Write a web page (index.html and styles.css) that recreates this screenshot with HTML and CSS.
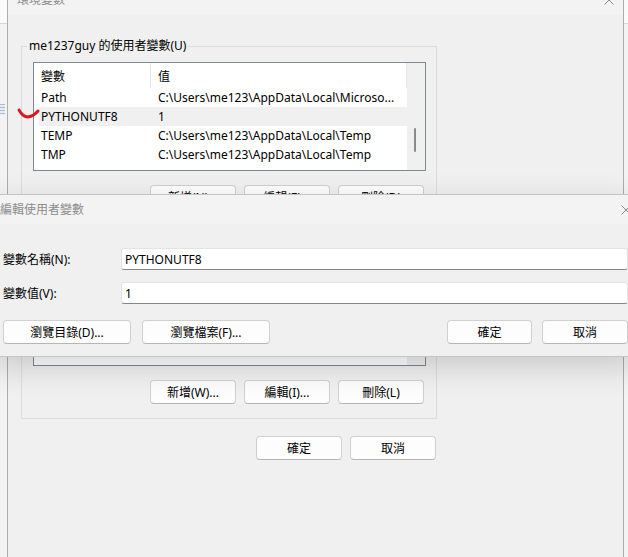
FILE: index.html
```html
<!DOCTYPE html>
<html lang="zh-Hant">

<head>
  <meta charset="UTF-8">
  <meta name="viewport" content="width=device-width, initial-scale=1.0">
  <title>環境變數</title>
  <link rel="stylesheet" href="styles.css">
</head>

<body>
  <div class="desk">
    <!-- 뒤쪽 창 -->
    <div class="desk__bar"></div>
    <div class="desk__icon"></div>

    <!-- 환경변수 창 -->
    <div class="env-win">
      <div class="titlebar">
        <span class="titlebar__text">環境變數</span>
        <svg class="titlebar__close" width="10" height="10" viewBox="0 0 10 10">
          <path d="M0.5 0.5 L9.5 9.5 M9.5 0.5 L0.5 9.5" stroke="#8a8a8a" stroke-width="1" fill="none" />
        </svg>
      </div>
      <div class="env-body">
        <fieldset class="group">
          <legend class="group__label">me1237guy 的使用者變數(U)</legend>
          <div class="lv">
            <div class="lv__main">
              <div class="lv__head">
                <div class="lv__col lv__col--name">變數</div>
                <div class="lv__col lv__col--value">值</div>
              </div>
              <div class="lv__row">
                <div class="lv__cell lv__cell--name">Path</div>
                <div class="lv__cell">C:\Users\me123\AppData\Local\Microso...</div>
              </div>
              <div class="lv__row lv__row--sel">
                <div class="lv__cell lv__cell--name">PYTHONUTF8</div>
                <div class="lv__cell">1</div>
              </div>
              <div class="lv__row">
                <div class="lv__cell lv__cell--name">TEMP</div>
                <div class="lv__cell">C:\Users\me123\AppData\Local\Temp</div>
              </div>
              <div class="lv__row">
                <div class="lv__cell lv__cell--name">TMP</div>
                <div class="lv__cell">C:\Users\me123\AppData\Local\Temp</div>
              </div>
            </div>
            <div class="lv__scroll"><div class="lv__thumb"></div></div>
          </div>
          <div class="btn-row">
            <button class="btn">新增(N)...</button>
            <button class="btn">編輯(E)...</button>
            <button class="btn">刪除(D)</button>
          </div>
        </fieldset>

        <fieldset class="group group--sys">
          <legend class="group__label">系統變數(S)</legend>
          <div class="lv lv--sys">
            <div class="lv__main">
              <div class="lv__head">
                <div class="lv__col lv__col--name">變數</div>
                <div class="lv__col lv__col--value">值</div>
              </div>
              <div class="lv__row">
                <div class="lv__cell lv__cell--name">ComSpec</div>
                <div class="lv__cell">C:\Windows\system32\cmd.exe</div>
              </div>
              <div class="lv__row">
                <div class="lv__cell lv__cell--name">DriverData</div>
                <div class="lv__cell">C:\Windows\System32\Drivers\DriverData</div>
              </div>
              <div class="lv__row">
                <div class="lv__cell lv__cell--name">NUMBER_OF_PR...</div>
                <div class="lv__cell">8</div>
              </div>
              <div class="lv__row">
                <div class="lv__cell lv__cell--name">OS</div>
                <div class="lv__cell">Windows_NT</div>
              </div>
            </div>
            <div class="lv__scroll"></div>
          </div>
          <div class="btn-row">
            <button class="btn">新增(W)...</button>
            <button class="btn">編輯(I)...</button>
            <button class="btn">刪除(L)</button>
          </div>
        </fieldset>

        <div class="btn-row btn-row--main">
          <button class="btn">確定</button>
          <button class="btn">取消</button>
        </div>
      </div>
    </div>

    <!-- 편집 대화상자 -->
    <div class="edit-dlg">
      <div class="titlebar titlebar--dlg">
        <span class="titlebar__text">編輯使用者變數</span>
        <svg class="titlebar__close" width="10" height="10" viewBox="0 0 10 10">
          <path d="M0.5 0.5 L9.5 9.5 M9.5 0.5 L0.5 9.5" stroke="#8a8a8a" stroke-width="1" fill="none" />
        </svg>
      </div>
      <div class="edit-dlg__body">
        <div class="field">
          <label class="field__label">變數名稱(N):</label>
          <input class="field__input" type="text" value="PYTHONUTF8">
        </div>
        <div class="field field--next">
          <label class="field__label">變數值(V):</label>
          <input class="field__input" type="text" value="1">
        </div>
        <div class="dlg-btns">
          <button class="btn btn--wide">瀏覽目錄(D)...</button>
          <button class="btn btn--wide">瀏覽檔案(F)...</button>
          <button class="btn btn--ok">確定</button>
          <button class="btn btn--cancel">取消</button>
        </div>
      </div>
    </div>

    <!-- 빨간 표시 -->
    <svg class="mark" width="26" height="16" viewBox="0 0 26 16">
      <path d="M3 4 Q 7 11, 12 11 Q 18 10, 22 5" stroke="#e0141c" stroke-width="3" stroke-linecap="round" fill="none" />
    </svg>
  </div>
</body>

</html>
```

FILE: styles.css
```css
body {
  margin: 0;
  font-family: "Noto Sans", "Noto Sans CJK TC", sans-serif;
  font-size: 12px;
  color: #000;
}

.desk {
  position: relative;
  width: 628px;
  height: 557px;
  overflow: hidden;
  background: #f3f3f3;
}

.desk__bar {
  height: 23px;
  border-bottom: 1px solid #d6d6d6;
  background: #fafafa;
}

.desk__icon {
  width: 5px;
  height: 11px;
  margin-top: 80px;
  background: repeating-linear-gradient(#a9bcd3 0 1px, #e6edf5 1px 3px);
}

/* 뒤쪽 환경변수 창 */
.env-win {
  position: absolute;
  left: 7px;
  top: -15px;
  width: 617px;
  height: 590px;
  box-sizing: border-box;
  border-left: 1px solid #adadad;
  border-right: 1px solid #adadad;
  background: #f0f0f0;
}

.titlebar {
  display: flex;
  align-items: center;
  justify-content: space-between;
  height: 30px;
  padding: 0 9px 0 9px;
  background: #f3f3f3;
}

.titlebar__text {
  color: #8c8c8c;
  line-height: 16px;
}

.env-body {
  padding-left: 13px;
}

.group {
  width: 416px;
  box-sizing: border-box;
  margin: 24px 0 0;
  padding: 9px 10px 10px 5px;
  border: 1px solid #dcdcdc;
}

.group--sys {
  margin-top: 7px;
  padding-bottom: 14px;
}

.group__label {
  padding: 0 2px;
  line-height: 14px;
}

/* 리스트뷰 */
.lv {
  display: flex;
  width: 393px;
  height: 109px;
  margin-left: 6px;
  box-sizing: border-box;
  border: 1px solid #828790;
  background: #fff;
  overflow: hidden;
}

.lv--sys {
  height: 116px;
}

.lv__main {
  flex: 1;
}

.lv__head {
  display: flex;
  height: 25px;
}

.lv__col {
  display: flex;
  align-items: center;
  padding-left: 7px;
  box-sizing: border-box;
  border-right: 1px solid #e5e5e5;
}

.lv__col--name {
  width: 117px;
}

.lv__col--value {
  flex: 1;
}

.lv__row {
  display: flex;
  align-items: center;
  height: 19px;
  margin-left: 5px;
  white-space: nowrap;
}

.lv__row--sel {
  background: #f0f0f0;
}

.lv__cell {
  padding-left: 7px;
}

.lv__cell--name {
  width: 112px;
  box-sizing: border-box;
  padding-left: 2px;
}

.lv__scroll {
  width: 18px;
  background: #f0f0f0;
}

.lv__thumb {
  width: 2px;
  height: 24px;
  margin: 65px 0 0 7px;
  border-radius: 1px;
  background: #8a8a8a;
}

/* 버튼 */
.btn {
  width: 86px;
  height: 24px;
  padding: 0;
  box-sizing: border-box;
  border: 1px solid #d0d0d0;
  border-bottom-color: #b6b6b6;
  border-radius: 4px;
  background: #fdfdfd;
  font-family: inherit;
  font-size: 12px;
  color: #000;
}

.btn-row {
  display: flex;
  justify-content: flex-end;
  gap: 8px;
  margin-top: 14px;
  padding-right: 2px;
}

.btn-row--main {
  width: 416px;
  margin-top: 17px;
  padding-right: 1px;
  box-sizing: border-box;
}

/* 편집 대화상자 */
.edit-dlg {
  position: absolute;
  left: -12px;
  top: 194px;
  width: 652px;
  height: 163px;
  box-sizing: border-box;
  border: 1px solid #c4c4c4;
  background: #f0f0f0;
  box-shadow: 0 10px 30px rgba(0, 0, 0, 0.16);
}

.titlebar--dlg {
  height: 29px;
  padding: 0 8px 0 11px;
}

.edit-dlg__body {
  padding: 24px 11px 12px 14px;
}

.field {
  display: flex;
  align-items: center;
}

.field--next {
  margin-top: 12px;
}

.field__label {
  width: 118px;
}

.field__input {
  flex: 1;
  height: 22px;
  box-sizing: border-box;
  margin: 0;
  padding: 0 3px;
  border: 1px solid #e3e3e3;
  border-bottom-color: #868686;
  border-radius: 3px;
  background: #fff;
  font-family: inherit;
  font-size: 12px;
  color: #000;
}

.dlg-btns {
  display: flex;
  gap: 11px;
  margin-top: 16px;
}

.btn--wide {
  width: 128px;
}

.btn--ok {
  width: 85px;
  margin-left: auto;
  margin-right: -1px;
}

.btn--cancel {
  width: 86px;
}

.mark {
  position: absolute;
  left: 16px;
  top: 106px;
}
```
